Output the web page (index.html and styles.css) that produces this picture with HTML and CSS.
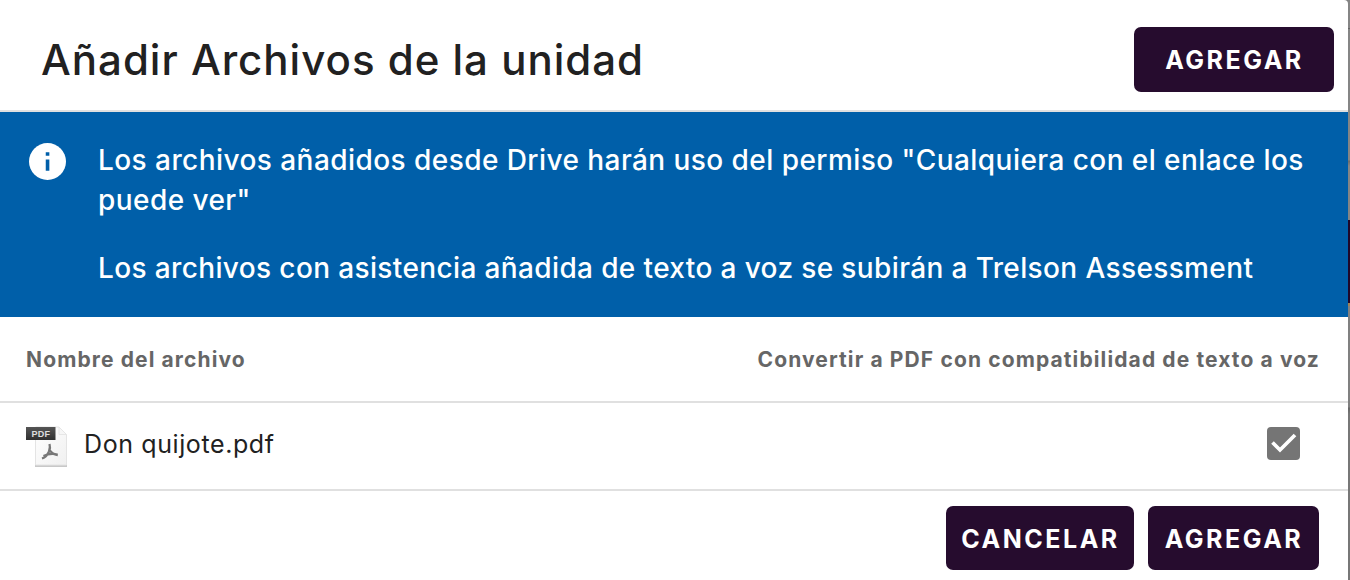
FILE: index.html
```html
<!DOCTYPE html>
<html lang="es">
<head>
<meta charset="utf-8">
<title>Añadir Archivos de la unidad</title>
<link rel="stylesheet" href="styles.css">
</head>
<body>
<div class="dialog">
  <header class="header">
    <h1 class="title">Añadir Archivos de la unidad</h1>
    <button class="button button-wide">AGREGAR</button>
  </header>
  <section class="notice">
    <svg class="info" viewBox="0 0 36 36"><circle cx="18" cy="18" r="18" fill="#fff"/><path d="M16.3 9h3.500v3.500h-3.500zM16.300 16h3.500v11h-3.500z" fill="#005fa9"/></svg>
    <div class="messages">
      <p class="message"><span class="line-a">Los archivos añadidos desde Drive harán uso del permiso "Cualquiera con el enlace los</span> <span class="line-b">puede ver"</span></p>
      <p class="message message-last">Los archivos con asistencia añadida de texto a voz se subirán a Trelson Assessment</p>
    </div>
  </section>
  <div class="table-head">
    <span class="col-name">Nombre del archivo</span>
    <span class="col-convert">Convertir a PDF con compatibilidad de texto a voz</span>
  </div>
  <div class="file-row">
    <svg class="pdf" viewBox="0 0 44 44">
      <defs>
        <linearGradient id="paper" x1="0" y1="0" x2="1" y2="1"><stop offset="0" stop-color="#fff"/><stop offset="1" stop-color="#f0f0f0"/></linearGradient>
        <linearGradient id="label" x1="0" y1="0" x2="0" y2="1"><stop offset="0" stop-color="#555"/><stop offset="1" stop-color="#303030"/></linearGradient>
      </defs>
      <path d="M9 42H41" stroke="#c8c8c8" stroke-width="2"/>
      <path d="M9.500 3H33l7.500 7.500V41h-31z" fill="url(#paper)" stroke="#e4e4e4"/>
      <path d="M33 3v7.500h7.500z" fill="#f6f6f6" stroke="#e6e6e6"/>
      <path d="M23.500 20c1 3 .5 5-.5 7.500-1.500 3.500-4 6-7 7M23.300 25.500c1.500 3 4.500 5 8.500 5.500M17.500 32c4-2 8-3 14-1.500" fill="none" stroke="#777" stroke-width="2.300"/>
      <path d="M0 3h29.500v13H0z" fill="url(#label)"/>
      <text class="pdf-text" x="5.500" y="12.800">PDF</text>
    </svg>
    <span class="file-name">Don quijote.pdf</span>
    <svg class="check" viewBox="0 0 33 33"><rect width="33" height="33" rx="4" fill="#757575"/><path d="M5.500 15.500l7.500 7.500L28 8" fill="none" stroke="#fff" stroke-width="3.700"/></svg>
  </div>
  <footer class="footer">
    <button class="button button-cancel">CANCELAR</button>
    <button class="button button-add">AGREGAR</button>
  </footer>
</div>
<div class="backdrop"></div>
</body>
</html>
```
FILE: styles.css
```css
* { box-sizing: border-box; }
body {
  margin: 0;
  height: 580px;
  display: flex;
  overflow: hidden;
  background: #808080;
  font-family: Inter, "Liberation Sans", sans-serif;
  color: #212121;
}
.dialog {
  width: 1348px;
  height: 580px;
  background: #fff;
  border-top-right-radius: 4px;
  white-space: nowrap;
}
.backdrop {
  width: 2px;
  background: linear-gradient(#858585 0 28px, #656565 28px 29px, #858585 29px 160px, #6c6c6c 161px, #858585 166px 220px, #20082a 220px 303px, #a18053 303px 306px, #808080 306px 407px, #666 408px, #777 414px);
}
.header {
  height: 112px;
  padding: 10px 14px 0 41px;
  border-bottom: 2px solid #e0e0e0;
  display: flex;
  align-items: center;
  justify-content: space-between;
}
.title {
  margin: 0;
  font-size: 42px;
  line-height: 56px;
  font-weight: 450;
  letter-spacing: 1px;
}
.button {
  height: 64px;
  padding: 2px 0 0 1px;
  border: 0;
  border-radius: 7px;
  background: #260c2e;
  color: #fff;
  font: 650 25px/32px Inter, "Liberation Sans", sans-serif;
  letter-spacing: 2.5px;
}
.button-wide { width: 200px; height: 65px; margin-bottom: 2px; }
.button-cancel { width: 188px; }
.button-add { width: 171px; }
.notice {
  height: 205px;
  padding: 28px 0 0 29px;
  display: flex;
  background: #005fa9;
  color: #fff;
}
.info { width: 37px; height: 37px; margin: 3px 32px 0 0; }
.message {
  margin: 0 0 28px;
  font-size: 28px;
  line-height: 40px;
  font-weight: 520;
  letter-spacing: .44px;
}
.message-last { letter-spacing: .37px; }
.line-b { display: block; }
.table-head {
  height: 86px;
  padding: 1px 28px 0 26px;
  border-bottom: 2px solid #e0e0e0;
  display: flex;
  align-items: center;
  justify-content: space-between;
  color: #666;
  font-size: 21px;
  font-weight: 660;
  letter-spacing: 1.12px;
}
.file-row {
  height: 88px;
  padding: 0 48px 4px 26px;
  border-bottom: 2px solid #e0e0e0;
  display: flex;
  align-items: center;
}
.pdf { width: 44px; height: 44px; position: relative; top: 2px; }
.pdf-text { font: 700 9px "Liberation Sans", sans-serif; fill: #ddd; letter-spacing: .3px; }
.file-name { margin-left: 14px; font-size: 25px; letter-spacing: .6px; }
.check { width: 33px; height: 33px; margin: 0 0 2px auto; }
.footer {
  padding: 15px 29px 0 0;
  display: flex;
  justify-content: flex-end;
  gap: 14px;
}
```
